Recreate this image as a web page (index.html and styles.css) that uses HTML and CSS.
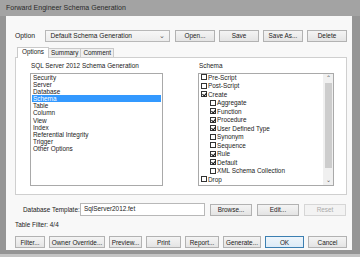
FILE: index.html
```html
<!DOCTYPE html>
<html>
	<head>
		<meta charset="utf-8" />
		<title>Forward Engineer Schema Generation</title>
		<link rel="stylesheet" href="styles.css">
	</head>
	<body>
		<div class="frame">
			<div class="title">Forward Engineer Schema Generation</div>
			<div class="client">
				<div class="option-row">
					<span class="lbl opt-lbl">Option</span>
					<div class="combo"><span>Default Schema Generation</span><i class="chev">&#8964;</i></div>
					<div class="btns top-btns">
						<button>Open...</button>
						<button>Save</button>
						<button>Save As...</button>
						<button>Delete</button>
					</div>
				</div>
				<div class="tabs">
					<span class="tab active">Options</span>
					<span class="tab">Summary</span>
					<span class="tab">Comment</span>
				</div>
				<div class="panel">
					<div class="col left-col">
						<div class="cap">SQL Server 2012 Schema Generation</div>
						<ul class="list">
							<li>Security</li>
							<li>Server</li>
							<li>Database</li>
							<li class="sel">Schema</li>
							<li>Table</li>
							<li>Column</li>
							<li>View</li>
							<li>Index</li>
							<li>Referential Integrity</li>
							<li>Trigger</li>
							<li>Other Options</li>
						</ul>
					</div>
					<div class="col right-col">
						<div class="cap">Schema</div>
						<div class="checkbox-list">
							<ul class="checks">
								<li><i class="chk"></i>Pre-Script</li>
								<li><i class="chk"></i>Post-Script</li>
								<li><i class="chk on"></i>Create</li>
								<li class="sub"><i class="chk"></i>Aggregate</li>
								<li class="sub"><i class="chk on"></i>Function</li>
								<li class="sub"><i class="chk on"></i>Procedure</li>
								<li class="sub"><i class="chk on"></i>User Defined Type</li>
								<li class="sub"><i class="chk"></i>Synonym</li>
								<li class="sub"><i class="chk"></i>Sequence</li>
								<li class="sub"><i class="chk on"></i>Rule</li>
								<li class="sub"><i class="chk on"></i>Default</li>
								<li class="sub"><i class="chk"></i>XML Schema Collection</li>
								<li><i class="chk"></i>Drop</li>
							</ul>
							<div class="scrollbar">
								<span class="arr">&#8963;</span>
								<span class="thumb"></span>
								<span class="arr">&#8964;</span>
							</div>
						</div>
					</div>
				</div>
				<div class="template-row">
					<span class="lbl tpl-lbl">Database Template:</span>
					<div class="input">SqlServer2012.fet</div>
					<div class="btns tpl-btns">
						<button>Browse...</button>
						<button>Edit...</button>
						<button disabled>Reset</button>
					</div>
				</div>
				<div class="filter-text">Table Filter: 4/4</div>
				<div class="btns bottom-btns">
					<button class="w-filter">Filter...</button>
					<button class="w-owner">Owner Override...</button>
					<button class="w-preview">Preview...</button>
					<button class="w-print">Print</button>
					<button class="w-report">Report...</button>
					<button class="w-gen">Generate...</button>
					<button class="w-ok default">OK</button>
					<button class="w-cancel">Cancel</button>
				</div>
			</div>
		</div>
	</body>
</html>
```
FILE: styles.css
```css
* {
	margin: 0;
	padding: 0;
	box-sizing: border-box;
}
body {
	width: 360px;
	height: 257px;
	overflow: hidden;
	background-color: #c4c4c4;
	font-family: "Liberation Sans", Arial, sans-serif;
	font-size: 6.4px;
	color: #222;
}
ul {
	list-style: none;
}
.frame {
	height: 254px;
	background-color: #959595;
	padding: 0 8px 4px 6px;
	display: flex;
	flex-direction: column;
}
.title {
	height: 16px;
	line-height: 15px;
	font-size: 7px;
	color: #2a2a2a;
	background-color: #a3a3a3;
	margin: 0 -8px 0 -6px;
	padding-left: 6px;
}
.client {
	flex: 1;
	background-color: #f8f8f8;
	padding: 13px 5px 0 9px;
	display: flex;
	flex-direction: column;
}
.btns {
	display: flex;
	gap: 4px;
}
button {
	font-family: inherit;
	font-size: 6.4px;
	color: #222;
	height: 12px;
	background: linear-gradient(#f4f4f4, #e4e4e4);
	border: 1px solid #b2b2b2;
}
button:disabled {
	color: #aaa;
	background: #f3f3f3;
	border-color: #d6d6d6;
}
.option-row {
	display: flex;
	align-items: center;
	height: 13px;
}
.opt-lbl {
	width: 30px;
	font-size: 6.8px;
}
.combo {
	width: 127px;
	height: 12px;
	border: 1px solid #b8b8b8;
	background: linear-gradient(#f7f7f7, #ececec);
	display: flex;
	align-items: center;
	justify-content: space-between;
	padding: 0 4px 0 5px;
	font-size: 6.6px;
}
.chev {
	font-style: normal;
	font-size: 7px;
	color: #555;
	line-height: 4px;
}
.top-btns {
	margin-left: 5px;
}
.top-btns button {
	width: 40px;
}
.tabs {
	display: flex;
	margin-top: 6px;
	padding-left: 2px;
	height: 9px;
	align-items: flex-end;
}
.tab {
	height: 9px;
	line-height: 8px;
	padding: 0 2px;
	border: 1px solid #c9c9c9;
	border-bottom: none;
	background-color: #f0f0f0;
	margin-left: -1px;
}
.tab.active {
	height: 11px;
	background-color: #fff;
	padding: 0 4px;
	margin-left: 0;
	position: relative;
	top: 1px;
	z-index: 1;
}
.panel {
	height: 138px;
	background-color: #fff;
	border: 1px solid #cfcfcf;
	display: flex;
	padding: 3px 0 0 14px;
	gap: 35px;
}
.cap {
	height: 12px;
	line-height: 10px;
	padding-left: 1px;
}
.list {
	width: 133px;
	height: 113px;
	border: 1px solid #a9a9a9;
	padding: 0 0 0 1px;
}
.list li {
	height: 7.1px;
	line-height: 7.1px;
	padding-left: 1px;
	margin-right: 1px;
}
.list li.sel {
	background-color: #3399ff;
	color: #fff;
}
.checkbox-list {
	width: 136px;
	height: 113px;
	border: 1px solid #a9a9a9;
	display: flex;
	justify-content: space-between;
}
.checks {
	padding: 0 0 0 2px;
	margin-top: -1px;
}
.checks li {
	height: 8.5px;
	display: flex;
	align-items: center;
	gap: 1px;
}
.checks li.sub {
	padding-left: 9px;
}
.chk {
	width: 6px;
	height: 6px;
	border: 1px solid #333;
	background-color: #fff;
	position: relative;
}
.chk.on::after {
	content: "";
	position: absolute;
	left: 1px;
	top: 0;
	width: 2px;
	height: 3px;
	border-right: 1px solid #111;
	border-bottom: 1px solid #111;
	transform: rotate(40deg);
}
.scrollbar {
	width: 10px;
	background-color: #f0f0f0;
	display: flex;
	flex-direction: column;
	align-items: center;
}
.arr {
	height: 9px;
	line-height: 9px;
	font-size: 6px;
	color: #555;
}
.thumb {
	flex: 1;
	width: 7px;
	background-color: #cdcdcd;
	margin-bottom: 8px;
}
.template-row {
	display: flex;
	align-items: center;
	height: 13px;
	margin-top: 8px;
	padding-left: 8px;
}
.tpl-lbl {
	width: 57px;
}
.input {
	width: 125px;
	height: 13px;
	border: 1px solid #b8b8b8;
	background-color: #fff;
	line-height: 10px;
	padding-left: 3px;
}
.tpl-btns {
	margin-left: 5px;
	gap: 5px;
}
.tpl-btns button {
	width: 42px;
}
.filter-text {
	margin-top: 5px;
	height: 8px;
	line-height: 8px;
}
.bottom-btns {
	margin-top: 7px;
	gap: 4px;
}
.w-filter { width: 30px; }
.w-owner { width: 56px; }
.w-preview { width: 33px; }
.w-print { width: 35px; }
.w-report { width: 34px; }
.w-gen { width: 38px; }
.w-ok { width: 39px; }
.w-cancel { width: 39px; }
button.default {
	border-color: #3c7fb1;
	background: linear-gradient(#eef5fb, #dcebf7);
}
```
